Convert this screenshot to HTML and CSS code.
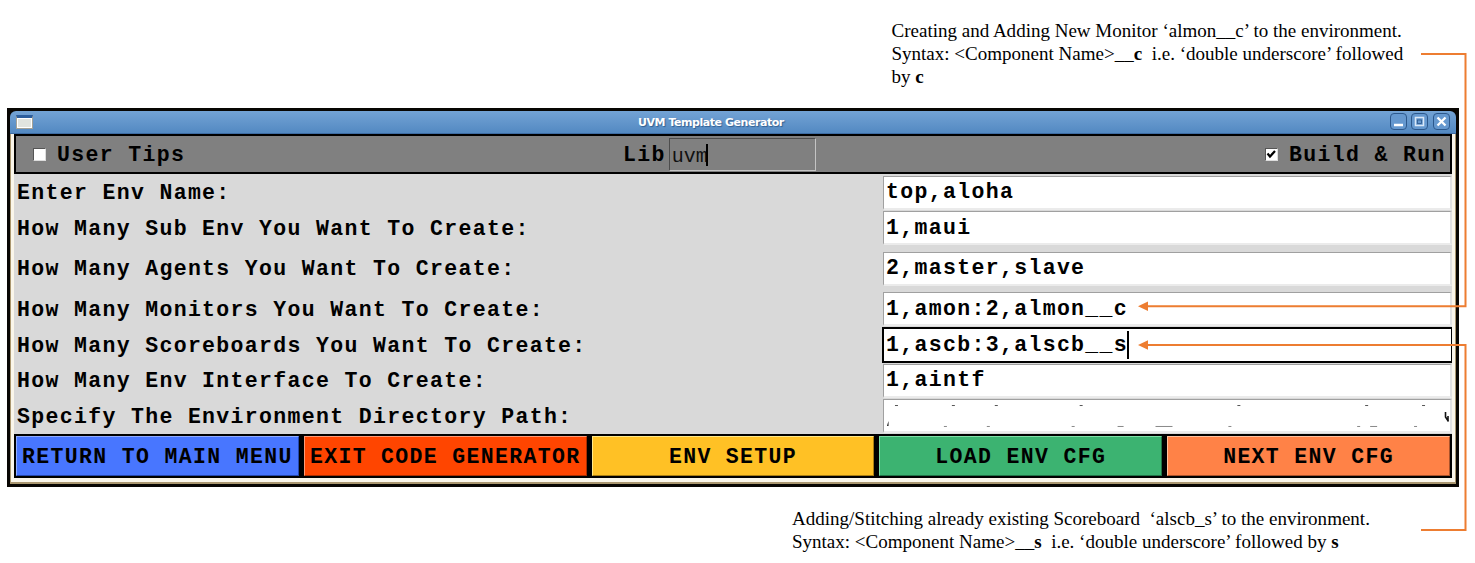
FILE: index.html
```
<!DOCTYPE html>
<html lang="en">
<head>
<meta charset="utf-8">
<title>UVM Template Generator</title>
<link rel="stylesheet" href="styles.css">
</head>
<body>
<div class="page">
  <div class="note note-top">
    <div>Creating and Adding New Monitor ‘almon__c’ to the environment.</div>
    <div>Syntax: &lt;Component Name&gt;__<b>c</b>&nbsp; i.e. ‘double underscore’ followed</div>
    <div>by <b>c</b></div>
  </div>
  <main class="window">
    <header class="titlebar">
      <span class="app-icon"></span>
      <span class="title">UVM Template Generator</span>
      <svg class="controls" width="60" height="18" viewBox="0 0 60 18">
        <g fill="#6598cf" stroke="#2c588c">
          <rect x="0.5" y="0.5" width="16" height="16" rx="3.5"/>
          <rect x="21.500" y="0.5" width="16" height="16" rx="3.5"/>
          <rect x="43.500" y="0.5" width="16" height="16" rx="3.5"/>
        </g>
        <path d="M4 12h9" stroke="#fff" stroke-width="2.500"/>
        <rect x="25.500" y="4.500" width="8" height="8" fill="none" stroke="#dbe8f7" stroke-width="1.500"/>
        <rect x="27.500" y="7" width="4" height="3.500" fill="none" stroke="#2c588c" stroke-width=".8"/>
        <path d="M47.500 4.500l8 8m0-8l-8 8" stroke="#fff" stroke-width="2.300"/>
      </svg>
    </header>
    <div class="content">
      <div class="toolbar">
        <div class="option"><span class="check"></span><span class="label">User Tips</span></div>
        <div class="library"><span class="label">Lib</span><span class="lib-input">uvm<i class="caret"></i></span></div>
        <div class="option option-right"><span class="check"><svg width="11" height="11" viewBox="0 0 11 11"><path d="M1.500 4.500L4 7.500L9 2" fill="none" stroke="#000" stroke-width="2.200"/></svg></span><span class="label">Build &amp; Run</span></div>
      </div>
      <div class="form">
        <div class="row"><span class="label">Enter Env Name:</span><span class="field">top,aloha</span></div>
        <div class="row"><span class="label">How Many Sub Env You Want To Create:</span><span class="field">1,maui</span></div>
        <div class="row spaced"><span class="label">How Many Agents You Want To Create:</span><span class="field">2,master,slave</span></div>
        <div class="row spaced"><span class="label">How Many Monitors You Want To Create:</span><span class="field">1,amon:2,almon__c</span></div>
        <div class="row focused"><span class="label">How Many Scoreboards You Want To Create:</span><span class="field">1,ascb:3,alscb__s<i class="caret"></i></span></div>
        <div class="row"><span class="label">How Many Env Interface To Create:</span><span class="field">1,aintf</span></div>
        <div class="row"><span class="label">Specify The Environment Directory Path:</span><span class="field marks">
          <svg class="path-marks" width="565" height="31" viewBox="0 0 565 31">
            <path d="M9 4.500h3M66 4.500h3M109 4.500h3M194 4.500h3M352 4.500h3M480 4.500h3M537 4.500h3" stroke="#555"/>
            <path d="M58 25.500h3M101 25.500h3M186 25.500h3M232 25.500h6M270 25.500h17M343 25.500h3M472 25.500h3M485 25.500h7M529 25.500h3" stroke="#888"/>
            <path d="M1 25l1.500-5v5z" fill="#111"/>
            <path d="M560.500 11v5l3 4.500M563 15v5" fill="none" stroke="#111" stroke-width="1.600"/>
          </svg></span></div>
      </div>
      <div class="actions">
        <div class="btn blue">RETURN TO MAIN MENU</div>
        <div class="btn red">EXIT CODE GENERATOR</div>
        <div class="btn yellow">ENV SETUP</div>
        <div class="btn green">LOAD ENV CFG</div>
        <div class="btn orange">NEXT ENV CFG</div>
      </div>
    </div>
  </main>
  <div class="note note-bottom">
    <div>Adding/Stitching already existing Scoreboard&nbsp; ‘alscb_s’ to the environment.</div>
    <div>Syntax: &lt;Component Name&gt;__<b>s</b>&nbsp; i.e. ‘double underscore’ followed by <b>s</b></div>
  </div>
  <svg class="arrows" width="1475" height="563" viewBox="0 0 1475 563">
    <g fill="none" stroke="#ed7d31" stroke-width="2">
      <path d="M1421 54H1465.500V306.300H1146"/>
      <path d="M1421 530H1465.500V345H1146"/>
    </g>
    <path d="M1138 306.300l10-4.700v9.400zM1138 345l10-4.700v9.400z" fill="#ed7d31"/>
  </svg>
</div>
</body>
</html>
```
FILE: styles.css
```
* { box-sizing: border-box; }
body { margin: 0; background: #fff; }
.page { position: relative; width: 1475px; height: 563px; overflow: hidden; color: #000; }
.note { font: 19.020px/23px "Liberation Serif", serif; white-space: nowrap; }
.note-top { height: 108px; padding: 19px 0 0 891.500px; }
.note-bottom { padding: 20px 0 0 792px; }
.window { width: 1452px; height: 379px; margin-left: 7px; padding: 3px; background: #080603; }
.titlebar {
  display: flex; align-items: center;
  height: 23px; padding: 0 6px; border-radius: 6px 6px 0 0;
  background: linear-gradient(#73a3d5, #5389c2); border-bottom: 1px solid #3d6ca3;
}
.app-icon { width: 17px; height: 14px; background: #e1e4df; border: 1px solid #a4a297; border-top: 3px solid #2b5d9c; box-shadow: inset 0 0 0 1px #fff; }
.title { margin-left: 605px; padding-top: 1px; font: bold 11px "DejaVu Sans", sans-serif; letter-spacing: -.45px; color: #fff; text-shadow: 1px 1px 1px #315f91; }
.controls { margin-left: auto; }
.content { height: 350px; padding: 0 4px 4px; background: #faf6ea; border: solid #aa9770; border-width: 0 1px 2px; }
.toolbar {
  display: grid; grid-template-columns: 607px 1fr 190px; align-items: center;
  height: 40px; background: #808080; border: 2px solid #000; width: 1438px; margin-left: -1px;
}
.toolbar, .row, .btn { font: bold 21.500px/30px "Liberation Mono", monospace; letter-spacing: 1.338px; white-space: pre; }
.option { display: flex; align-items: center; gap: 11px; padding-left: 17px; }
.option-right { padding-left: 5px; }
.label { padding-top: 1px; }
.toolbar .label { padding-top: 1px; }
.check { width: 13px; height: 13px; background: #fff; border: 1px solid; border-color: #555 #ddd #ddd #555; line-height: 0; }
.library { display: flex; align-items: center; gap: 3px; }
.lib-input { display: flex; align-items: center; width: 147px; height: 33px; padding: 6px 0 0 2px; font-weight: normal; font-size: 20px; letter-spacing: 0; color: #111; border: 1px solid; border-color: #4d4d4d #c4c4c4 #c4c4c4 #4d4d4d; }
.lib-input .caret { height: 22px; margin: -4px 0 0 -2px; }
.caret { width: 2px; height: 28px; background: #000; }
.form { display: flex; flex-direction: column; gap: 1.500px; height: 260px; margin: 0 -1px; padding: 1.500px 0 0; background: #d9d9d9; }
.row { display: grid; grid-template-columns: 866px 569px; align-items: center; height: 34px; padding-left: 3px; }
.row.spaced { margin-top: 5px; }
.row.focused { height: 35px; margin-top: -.5px; }
.field { display: flex; align-items: center; height: 34px; padding: 0 0 0 2px; background: #fff; border: solid; border-width: 1px 2px 2px 1px; border-color: #a0a0a0 #e1e1e1 #ebebeb #a0a0a0; }
.field.marks { padding-top: 1px; }
.focused .field { height: 36px; margin-left: -1px; border: 2px solid #000; border-width: 2px 1px 2px 2px; }
.focused .caret { margin: 0 0 0 -1px; }
.actions { display: flex; gap: 5px; height: 44px; margin: 0 -1px; padding: 2px; background: #000; }
.btn { flex: 1; text-align: center; line-height: 40px; color: #000; border: 1px solid; }
.blue { background: #4876ff; border-color: #91adff #2447ad #2447ad #91adff; }
.red { background: #ff4500; border-color: #ff9b76 #a92e00 #a92e00 #ff9b76; }
.yellow { background: #ffc125; border-color: #ffe98a #a97d12 #a97d12 #ffe98a; }
.green { background: #3cb371; border-color: #7fe0a7 #207346 #207346 #7fe0a7; }
.orange { background: #ff8247; border-color: #ffc29f #a9522a #a9522a #ffc29f; }
.arrows { position: absolute; top: 0; left: 0; }
```
